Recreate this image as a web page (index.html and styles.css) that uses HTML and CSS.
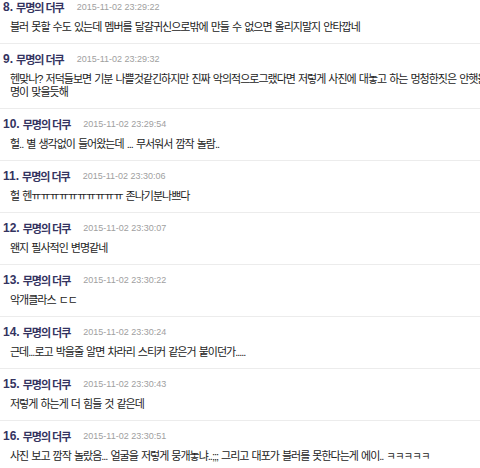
FILE: index.html
```html
<!DOCTYPE html>
<html lang="ko">
<head>
    <meta charset="UTF-8">
    <title>댓글</title>
    <link rel="stylesheet" href="styles.css">
</head>
<body>
    <div class="comments">
        <div class="comment">
            <div class="comment-head"><span class="num">8.</span> <span class="nick">무명의 더쿠</span><span class="date">2015-11-02 23:29:22</span></div>
            <div class="comment-body">블러 못할 수도 있는데 멤버를 달걀귀신으로밖에 만들 수 없으면 올리지말지 안타깝네</div>
        </div>
        <div class="comment">
            <div class="comment-head"><span class="num">9.</span> <span class="nick">무명의 더쿠</span><span class="date">2015-11-02 23:29:32</span></div>
            <div class="comment-body">헨맞나? 저덕들보면 기분 나쁠것같긴하지만 진짜 악의적으로그랬다면 저렇게 사진에 대놓고 하는 멍청한짓은 안햇을거란 설<br>명이 맞을듯해</div>
        </div>
        <div class="comment">
            <div class="comment-head"><span class="num">10.</span> <span class="nick">무명의 더쿠</span><span class="date">2015-11-02 23:29:54</span></div>
            <div class="comment-body">헐.. 별 생각없이 들어왔는데 ... 무서워서 깜작 놀람..</div>
        </div>
        <div class="comment">
            <div class="comment-head"><span class="num">11.</span> <span class="nick">무명의 더쿠</span><span class="date">2015-11-02 23:30:06</span></div>
            <div class="comment-body">헐 헨ㅠㅠㅠㅠㅠㅠㅠㅠㅠㅠ 존나기분나쁘다</div>
        </div>
        <div class="comment">
            <div class="comment-head"><span class="num">12.</span> <span class="nick">무명의 더쿠</span><span class="date">2015-11-02 23:30:07</span></div>
            <div class="comment-body">왠지 필사적인 변명같네</div>
        </div>
        <div class="comment">
            <div class="comment-head"><span class="num">13.</span> <span class="nick">무명의 더쿠</span><span class="date">2015-11-02 23:30:22</span></div>
            <div class="comment-body">악개클라스 ㄷㄷ</div>
        </div>
        <div class="comment">
            <div class="comment-head"><span class="num">14.</span> <span class="nick">무명의 더쿠</span><span class="date">2015-11-02 23:30:24</span></div>
            <div class="comment-body">근데...로고 박을줄 알면 차라리 스티커 같은거 붙이던가.....</div>
        </div>
        <div class="comment">
            <div class="comment-head"><span class="num">15.</span> <span class="nick">무명의 더쿠</span><span class="date">2015-11-02 23:30:43</span></div>
            <div class="comment-body">저렇게 하는게 더 힘들 것 같은데</div>
        </div>
        <div class="comment">
            <div class="comment-head"><span class="num">16.</span> <span class="nick">무명의 더쿠</span><span class="date">2015-11-02 23:30:51</span></div>
            <div class="comment-body">사진 보고 깜작 놀랐음... 얼굴을 저렇게 뭉개놓냐..;;; 그리고 대포가 블러를 못한다는게 에이.. <span class="jamo">ㅋㅋㅋㅋㅋ</span></div>
        </div>
    </div>
</body>
</html>
```

FILE: styles.css
```css
html, body {
    margin: 0;
    padding: 0;
    overflow: hidden;
    background: #fff;
}

body {
    font-family: "Liberation Sans", "Noto Sans CJK KR", sans-serif;
    color: #222;
}

.comments {
    width: 640px;
    margin-top: -8px;
}

.comment {
    padding: 7px 0 9px 3px;
    border-bottom: 1px solid #ececec;
}

.comment-head {
    display: flex;
    align-items: center;
    height: 16px;
    white-space: nowrap;
    color: #34335f;
}

.num {
    font-weight: bold;
    font-size: 12px;
    margin-right: 3px;
}

.nick {
    font-size: 11px;
    font-weight: bold;
    letter-spacing: -1px;
}

.date {
    font-size: 9px;
    color: #a0a0a0;
    margin-left: 13px;
}

.comment-body {
    margin-top: 6px;
    padding-left: 7px;
    font-size: 11px;
    line-height: 13px;
    letter-spacing: -1px;
    word-spacing: 1px;
    white-space: nowrap;
}

.jamo {
    font-size: 10px;
    letter-spacing: -0.5px;
}
```
